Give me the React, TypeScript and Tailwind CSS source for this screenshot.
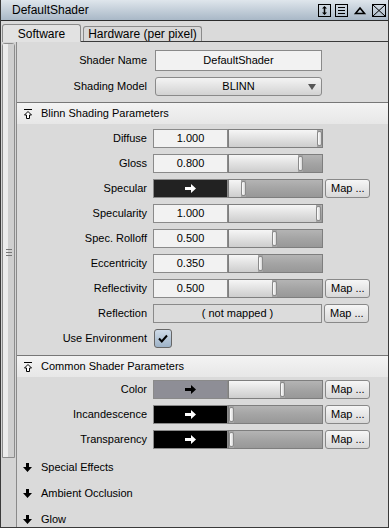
import React from 'react';

// Maya-style attribute editor panel for a Blinn shader

const ArrowIcon = ({ color }: { color: string }) => (
  <svg width="11" height="9" viewBox="0 0 11 9">
    <path d="M0 3h6V0l5 4.5-5 4.5V6H0z" fill={color} />
  </svg>
);

const ExpandedIcon = () => (
  <svg width="10" height="10" viewBox="0 0 10 10" className="shrink-0">
    <path d="M1 0.5h8" stroke="#000" strokeWidth="1" />
    <path d="M5 2.5 8.5 6H6.5v3.5h-3V6H1.5z" stroke="#000" strokeWidth="1" fill="#fff" strokeLinejoin="miter" />
  </svg>
);

const CollapsedIcon = () => (
  <svg width="9" height="9" viewBox="0 0 9 9" className="shrink-0">
    <path d="M3 0h3v4h3L4.5 9 0 4h3z" fill="#000" />
  </svg>
);

function Slider({ left }: { left: number }) {
  return (
    <div className="flex h-[19px] w-[95px] border border-[#7e7e7e] bg-[#a6a6a6]">
      <div
        className="h-full bg-gradient-to-b from-[#f6f6f6] to-[#cdcdcd]"
        style={{ width: left }}
      />
      <div className="my-[1px] w-[5px] rounded-[2px] border border-[#8a8a8a] bg-gradient-to-r from-[#ffffff] to-[#d6d6d6]" />
      <div className="h-full flex-1 bg-gradient-to-b from-[#b4b4b4] via-[#a4a4a4] to-[#989898]" />
    </div>
  );
}

function NumField({ value }: { value: string }) {
  return (
    <div className="flex h-[19px] w-[75px] items-center justify-center border border-[#8a8a8a] bg-[#f2f2f2] text-black">
      {value}
    </div>
  );
}

function Swatch({ bg, arrow }: { bg: string; arrow: string }) {
  return (
    <div className={`flex h-[19px] w-[75px] items-center justify-center border border-[#8a8a8a] ${bg}`}>
      <ArrowIcon color={arrow} />
    </div>
  );
}

function MapBtn() {
  return (
    <button
      type="button"
      className="ml-[2px] flex h-[19px] w-[45px] items-center rounded-[3px] border border-[#888] bg-gradient-to-b from-[#f6f6f6] to-[#d8d8d8] pl-[5px] text-black"
    >
      Map ...
    </button>
  );
}

function Row({ label, children }: { label: string; children: React.ReactNode }) {
  return (
    <div className="flex h-[25px] items-center">
      <div className="w-[130px] shrink-0 text-right text-black">{label}</div>
      <div className="ml-[6px] flex items-center">{children}</div>
    </div>
  );
}

function SectionHeader({ title }: { title: string }) {
  return (
    <div className="flex h-[22px] items-center border-t border-[#777] bg-gradient-to-b from-[#f3f3f3] to-[#e7e7e7] pl-[6px]">
      <ExpandedIcon />
      <span className="ml-[8px] text-black">{title}</span>
    </div>
  );
}

function Collapsed({ title }: { title: string }) {
  return (
    <div className="flex h-[26px] items-center pl-[6px]">
      <CollapsedIcon />
      <span className="ml-[9px] text-black">{title}</span>
    </div>
  );
}

export default function App() {
  const blinn = [
    { label: 'Diffuse', value: '1.000', left: 88 },
    { label: 'Gloss', value: '0.800', left: 69 },
  ];

  return (
    <div className="flex h-[528px] w-[389px] flex-col overflow-hidden border-x border-b border-[#3a3a3a] bg-[#dadada] font-['Liberation_Sans',Arial,sans-serif] text-[11px] leading-none">
      {/* title bar */}
      <div className="flex h-[21px] shrink-0 items-center border-b border-[#2c2c2c] bg-gradient-to-b from-[#dfe6ec] to-[#a9b8c7] pl-[11px] pr-[2px]">
        <span className="text-[12px] text-black">DefaultShader</span>
        <div className="ml-auto flex items-center gap-[4px]">
          <svg width="13" height="13" viewBox="0 0 13 13">
            <rect x="0.5" y="0.5" width="12" height="12" fill="none" stroke="#000" />
            <path d="M6.5 3v7" stroke="#000" strokeWidth="1.5" />
            <path d="M4 4.5 6.5 2 9 4.5zM4 8.5 6.5 11 9 8.5z" fill="#000" />
          </svg>
          <svg width="13" height="13" viewBox="0 0 13 13">
            <rect x="0.5" y="0.5" width="12" height="12" fill="none" stroke="#000" />
            <path d="M3 3.5h7M3 6.5h7M3 9.5h7" stroke="#000" />
          </svg>
          <svg width="14" height="12" viewBox="0 0 14 12" className="mx-[1px]">
            <path d="M2.5 9.5 7 4l4.5 5.5z" fill="none" stroke="#000" strokeWidth="1.6" />
          </svg>
          <svg width="14" height="13" viewBox="0 0 14 13">
            <rect x="0.5" y="0.5" width="13" height="12" fill="none" stroke="#000" />
            <path d="M1 1l12 11M13 1 1 12" stroke="#000" />
          </svg>
        </div>
      </div>

      {/* tabs */}
      <div className="flex h-[21px] shrink-0 items-end pl-[1px]">
        <div className="flex h-[18px] w-[79px] items-center justify-center rounded-t-[3px] border-x border-t border-[#8a8a8a] bg-[#e2e2e2] text-[12px] text-black">
          Software
        </div>
        <div className="flex h-full flex-1 flex-col justify-end">
          <div className="flex items-end">
            <div className="ml-[2px] flex h-[15px] w-[119px] items-center justify-center rounded-t-[3px] border-x border-t border-[#8a8a8a] bg-[#d8d8d8] text-[12px] text-black">
              Hardware (per pixel)
            </div>
          </div>
          <div className="h-[1px] bg-[#3a3a3a]" />
        </div>
      </div>

      {/* body */}
      <div className="flex min-h-0 flex-1">
        {/* scrollbar */}
        <div className="flex w-[16px] shrink-0 flex-col border-r border-[#8a8a8a] bg-[#d4d4d4] pl-[1px] pt-[1px]">
          <div className="relative flex h-[415px] w-[13px] rounded-t-[3px] border border-[#8c8c8c]">
            <div className="w-[5px] bg-[#ececec]" />
            <div className="flex-1 bg-[#cfcfcf]" />
            <div className="absolute left-[3px] top-[205px] flex w-[6px] flex-col gap-[2px]">
              <div className="h-[1px] bg-[#777]" />
              <div className="h-[1px] bg-[#777]" />
              <div className="h-[1px] bg-[#777]" />
            </div>
          </div>
        </div>

        {/* content */}
        <div className="min-w-0 flex-1">
          <div className="pt-[7px]">
            <div className="flex h-[22px] items-center">
              <div className="w-[130px] shrink-0 text-right text-black">Shader Name</div>
              <div className="ml-[8px] flex h-[21px] w-[167px] items-center justify-center border border-[#8a8a8a] bg-[#f2f2f2] text-black">
                DefaultShader
              </div>
            </div>
            <div className="mt-[5px] flex h-[20px] items-center">
              <div className="w-[130px] shrink-0 text-right text-black">Shading Model</div>
              <div className="relative ml-[8px] flex h-[19px] w-[167px] items-center justify-center rounded-[3px] border border-[#8a8a8a] bg-gradient-to-b from-[#f4f4f4] to-[#d2d2d2] text-black">
                BLINN
                <svg width="8" height="6" viewBox="0 0 8 6" className="absolute right-[5px] top-[6px]">
                  <path d="M0 0h8L4 6z" fill="#555" />
                </svg>
              </div>
            </div>
          </div>

          <div className="mt-[6px]">
            <SectionHeader title="Blinn Shading Parameters" />
            <div className="pb-[4px] pt-[2px]">
              {blinn.map((r) => (
                <Row key={r.label} label={r.label}>
                  <NumField value={r.value} />
                  <Slider left={r.left} />
                </Row>
              ))}
              <Row label="Specular">
                <Swatch bg="bg-[#222222]" arrow="#ffffff" />
                <Slider left={12} />
                <MapBtn />
              </Row>
              <Row label="Specularity">
                <NumField value="1.000" />
                <Slider left={87} />
              </Row>
              <Row label="Spec. Rolloff">
                <NumField value="0.500" />
                <Slider left={43} />
              </Row>
              <Row label="Eccentricity">
                <NumField value="0.350" />
                <Slider left={29} />
              </Row>
              <Row label="Reflectivity">
                <NumField value="0.500" />
                <Slider left={43} />
                <MapBtn />
              </Row>
              <Row label="Reflection">
                <div className="flex h-[19px] w-[169px] items-center justify-center border border-[#8a8a8a] bg-[#dcdcdc] text-black">
                  ( not mapped )
                </div>
                <MapBtn />
              </Row>
              <Row label="Use Environment">
                <div className="ml-[1px] flex h-[19px] w-[18px] items-center justify-center rounded-[3px] border border-[#666] bg-gradient-to-b from-[#cfdbe8] to-[#9db2c7]">
                  <svg width="10" height="9" viewBox="0 0 10 9">
                    <path d="M1 4.5 3.8 7.5 9 1.5" fill="none" stroke="#000" strokeWidth="2" />
                  </svg>
                </div>
              </Row>
            </div>
          </div>

          <SectionHeader title="Common Shader Parameters" />
          <div className="pb-[2px]">
            <Row label="Color">
              <Swatch bg="bg-[#8e8e96]" arrow="#000000" />
              <Slider left={51} />
              <MapBtn />
            </Row>
            <Row label="Incandescence">
              <Swatch bg="bg-black" arrow="#ffffff" />
              <Slider left={0} />
              <MapBtn />
            </Row>
            <Row label="Transparency">
              <Swatch bg="bg-black" arrow="#ffffff" />
              <Slider left={0} />
              <MapBtn />
            </Row>
          </div>

          <Collapsed title="Special Effects" />
          <Collapsed title="Ambient Occlusion" />
          <Collapsed title="Glow" />
        </div>
      </div>
    </div>
  );
}
